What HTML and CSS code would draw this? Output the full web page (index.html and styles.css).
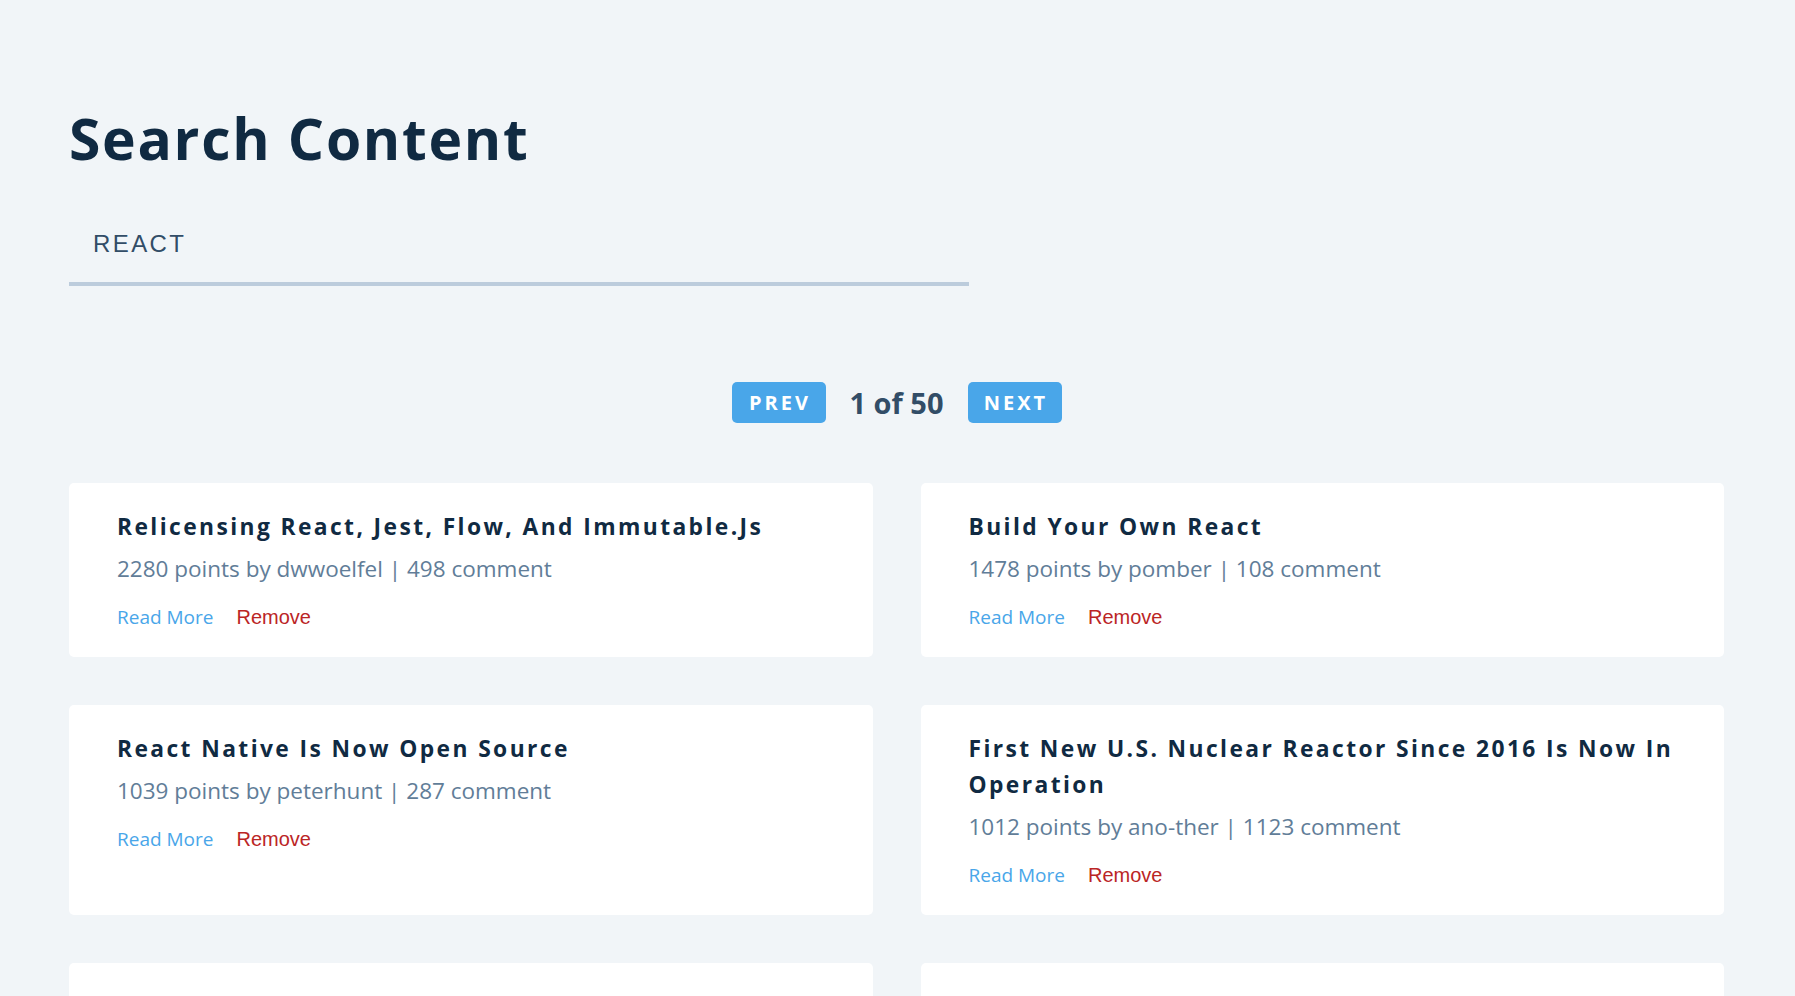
FILE: index.html
```html
<!DOCTYPE html>
<html lang="en">
<head>
<meta charset="utf-8">
<title>Search Content</title>
<link rel="stylesheet" href="styles.css">
</head>
<body>
<main class="page">
  <h1 class="page-title">Search Content</h1>
  <form class="search-form">
    <input class="form-input" type="text" value="react">
  </form>
  <div class="pagination">
    <button class="page-btn">prev</button>
    <p class="page-count">1 of 50</p>
    <button class="page-btn">next</button>
  </div>
  <section class="stories">
    <article class="story">
      <h4 class="story-title">Relicensing React, Jest, Flow, And Immutable.Js</h4>
      <p class="story-info">2280 points by dwwoelfel | 498 comment</p>
      <div class="story-links"><a class="read-link" href="#">Read More</a><button class="remove-btn">Remove</button></div>
    </article>
    <article class="story">
      <h4 class="story-title">Build Your Own React</h4>
      <p class="story-info">1478 points by pomber | 108 comment</p>
      <div class="story-links"><a class="read-link" href="#">Read More</a><button class="remove-btn">Remove</button></div>
    </article>
    <article class="story">
      <h4 class="story-title">React Native Is Now Open Source</h4>
      <p class="story-info">1039 points by peterhunt | 287 comment</p>
      <div class="story-links"><a class="read-link" href="#">Read More</a><button class="remove-btn">Remove</button></div>
    </article>
    <article class="story">
      <h4 class="story-title">First New U.S. Nuclear Reactor Since 2016 Is Now In Operation</h4>
      <p class="story-info">1012 points by ano-ther | 1123 comment</p>
      <div class="story-links"><a class="read-link" href="#">Read More</a><button class="remove-btn">Remove</button></div>
    </article>
    <article class="story story-empty" aria-hidden="true"></article>
    <article class="story story-empty" aria-hidden="true"></article>
  </section>
</main>
</body>
</html>
```

FILE: styles.css
```css
* {
  box-sizing: border-box;
  margin: 0;
  padding: 0;
}

body {
  background: #f1f5f8;
  font-family: "Open Sans", "Noto Sans", sans-serif;
  color: #102a42;
}

.page {
  padding: 108px 71px 0 69px;
}

.page-title {
  font-size: 57px;
  line-height: 60px;
  font-weight: 700;
  letter-spacing: 1.7px;
  color: #102a42;
}

.search-form {
  margin-top: 38px;
  width: 900px;
}

.form-input {
  display: block;
  width: 100%;
  padding: 24px;
  background: transparent;
  border: none;
  border-bottom: 4px solid #bcccdc;
  font-family: "Liberation Sans", Arial, sans-serif;
  font-size: 24px;
  line-height: 28px;
  letter-spacing: 2.4px;
  text-transform: uppercase;
  color: #324d67;
  outline: none;
}

.pagination {
  margin-top: 96px;
  margin-bottom: 60px;
  display: flex;
  justify-content: center;
  align-items: center;
  height: 41px;
}

.page-btn {
  width: 94px;
  height: 41px;
  border: none;
  border-radius: 5px;
  background: #49a6e9;
  color: #fff;
  font-family: "Open Sans", "Noto Sans", sans-serif;
  font-size: 20px;
  font-weight: 700;
  letter-spacing: 3px;
  text-transform: uppercase;
  padding: 0 0 0 3px;
}

.page-count {
  margin: 0 24px;
  font-size: 29px;
  font-weight: 700;
  line-height: 36px;
  color: #324d67;
}

.stories {
  display: grid;
  grid-template-columns: 1fr 1fr;
  gap: 48px;
}

.story {
  background: #fff;
  border-radius: 5px;
  padding: 26px 48px 24px;
}

.story-empty {
  min-height: 174px;
}

.story-title {
  font-size: 22.8px;
  line-height: 36px;
  font-weight: 700;
  letter-spacing: 2.4px;
  color: #102a42;
  margin-bottom: 6px;
}

.story-info {
  font-size: 22.5px;
  line-height: 36px;
  color: #617d98;
  margin-bottom: 15px;
}

.story-links {
  display: flex;
  align-items: center;
  height: 31px;
}

.read-link {
  font-size: 19px;
  line-height: 31px;
  color: #49a6e9;
  text-decoration: none;
  margin-right: 23px;
}

.remove-btn {
  background: transparent;
  border: none;
  font-family: "Liberation Sans", Arial, sans-serif;
  font-size: 20px;
  line-height: 31px;
  color: #bb2525;
  cursor: pointer;
}
```
